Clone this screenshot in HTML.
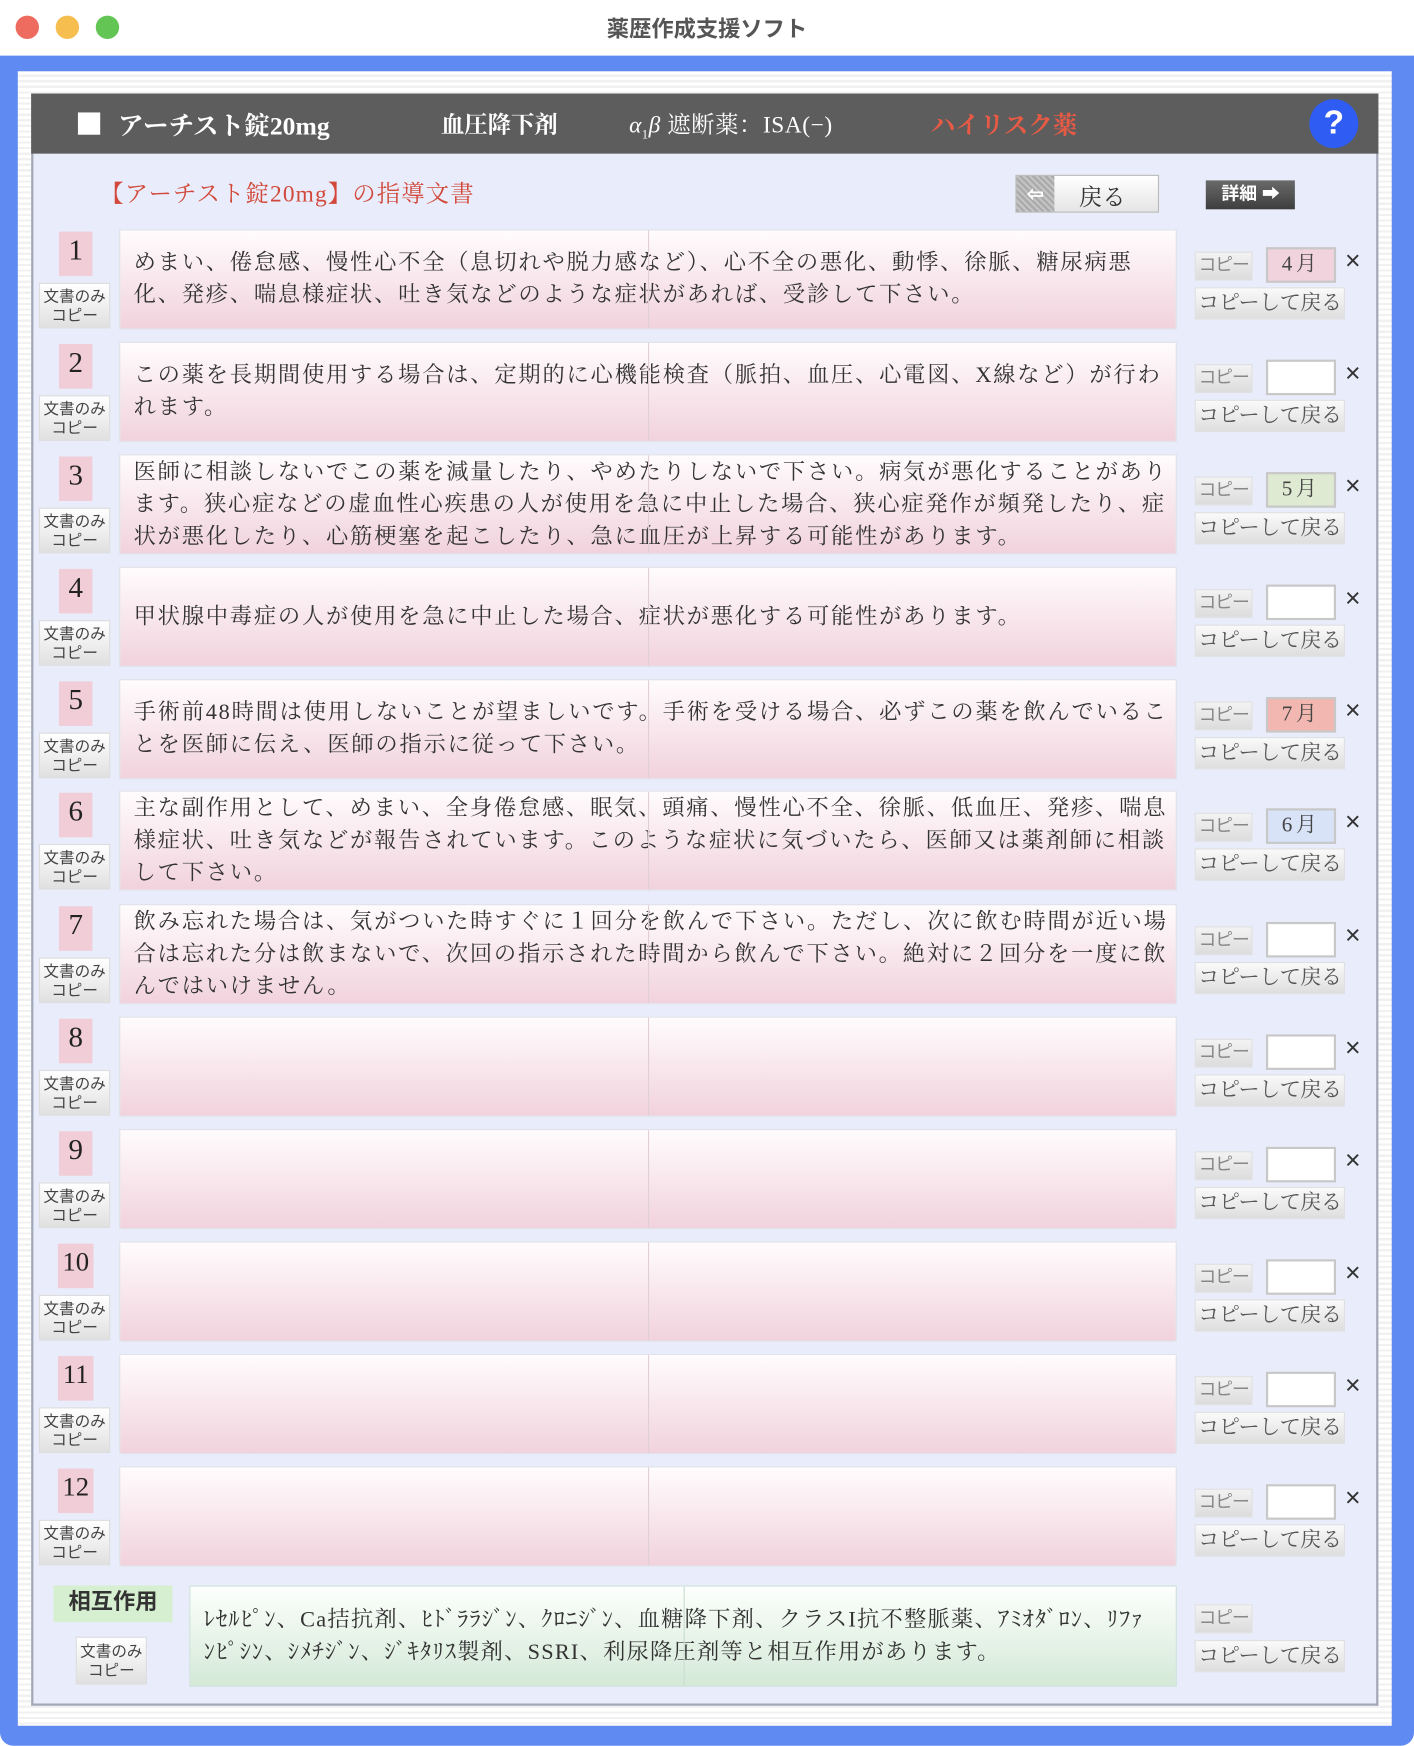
<!DOCTYPE html>
<html><head><meta charset="utf-8">
<style>
*{margin:0;padding:0;box-sizing:border-box}
html,body{width:1414px;height:1746px;overflow:hidden;background:#fff}
#w{position:absolute;left:0;top:0;width:1270px;height:1568px;transform:scale(1.11339);transform-origin:0 0;font-family:"Liberation Serif","Noto Serif CJK SC",serif;color:#333}
.a{position:absolute}
.tb{left:0;top:0;width:1270px;height:50px;background:#fff}
.dot{top:14px;width:21px;height:21px;border-radius:50%}
.ttl{left:0;width:1270px;top:10px;text-align:center;font:bold 20px "Liberation Sans","Noto Sans CJK JP",sans-serif;color:#555}
.blue{left:0;top:50px;width:1270px;height:1518px;background:#5f8af2;border-radius:0 0 12px 12px}
.inner{left:16px;top:64px;width:1234px;height:1486px;background:repeating-linear-gradient(#fff 0 3px,#f1f1f1 3px 5px)}
.panel{left:28px;top:84px;width:1210px;height:1448px;background:#e9edfb;border:2px solid #a3a8b8;border-top:none}
.hdr{left:28px;top:84px;width:1210px;height:54px;background:#5d5d5d;color:#fff;font-size:22px}
.hdr span{position:absolute;top:12px;white-space:nowrap}
.txt{position:absolute;left:107px;top:0;width:950px;height:90px;border:1px solid #e2e2e8;background:linear-gradient(#fffcfd,#f1d2dd);display:flex;align-items:center;padding-left:12px;font-size:20px;letter-spacing:1.6px;line-height:29px;white-space:nowrap;color:#333;overflow:hidden}
.txt:after{content:"";position:absolute;left:474px;top:0;width:1px;height:100%;background:#e0d0d6}
.num{position:absolute;left:53px;top:2px;width:30px;height:40px;background:#f0cdd7;font-size:26px;text-align:center;line-height:34px;color:#222}
.num.w{left:52px;width:32px;font-size:24px}
.doc{position:absolute;left:35px;top:48px;width:64px;height:41px;border:1px solid #ddd;background:linear-gradient(#fff,#e0e0e0);font-size:14px;line-height:17px;text-align:center;padding-top:3px;color:#444;font-family:"Liberation Sans","Noto Sans CJK JP",sans-serif;white-space:nowrap}
.cp{position:absolute;left:1073px;top:20px;width:52px;height:26px;background:linear-gradient(#f3f3f3,#dcdcdc);border:1px solid #e0e0e0;font:16px "Liberation Sans","Noto Sans CJK JP",sans-serif;letter-spacing:-1px;color:#888;text-align:center;line-height:24px;white-space:nowrap;overflow:hidden}
.mo{position:absolute;left:1137px;top:16px;width:63px;height:32px;background:#fff;border:2px solid #c8c8c8;font-size:19px;text-align:center;line-height:28px;letter-spacing:3px;color:#444;white-space:nowrap}
.x{position:absolute;left:1208px;top:15px;font:24px "Liberation Sans",sans-serif;color:#333}
.cr{position:absolute;left:1073px;top:52px;width:135px;height:29px;background:linear-gradient(#fafafa,#dedede);border:1px solid #e0e0e0;font-size:19px;text-align:center;line-height:27px;color:#555;white-space:nowrap;overflow:hidden;letter-spacing:-0.5px}
.row{position:absolute;left:0;width:1270px;height:92px}
</style></head><body><div id="w">
<div class="a tb"></div>
<div class="a dot" style="left:14px;background:#ee6b60"></div>
<div class="a dot" style="left:50px;background:#f5be4f"></div>
<div class="a dot" style="left:86px;background:#62c554"></div>
<div class="a ttl">薬歴作成支援ソフト</div>
<div class="a blue"></div>
<div class="a inner"></div>
<div class="a panel"></div>
<div class="a hdr">
<span style="left:42px;top:17px;width:20px;height:20px;background:#fff"></span>
<span style="left:78px;font-weight:bold;font-size:23px;top:11px">アーチスト錠20mg</span>
<span style="left:368px;font-weight:bold;top:12px;font-size:21px">血圧降下剤</span>
<span style="left:537px;font-size:21px;letter-spacing:0.5px"><i>α</i><sub style="font-size:11px">1</sub><i>β</i> 遮断薬：ISA(−)</span>
<span style="left:808px;color:#e95a45;font-size:22px;font-weight:bold">ハイリスク薬</span>
<span style="left:1148px;top:5px;width:44px;height:44px;border-radius:50%;background:#2f5cf3;text-align:center;font:bold 30px 'Liberation Sans',sans-serif;line-height:44px">?</span>
</div>
<div class="a" style="left:90px;top:158px;font-size:21px;color:#d2483a;letter-spacing:1px">【アーチスト錠20mg】の指導文書</div>
<div class="a" style="left:912px;top:157px;width:129px;height:34px;border:1px solid #bbb;background:linear-gradient(#fff,#e5e5e5)"><div style="position:absolute;left:0;top:0;width:34px;height:32px;background:repeating-linear-gradient(45deg,#aaa 0 2px,#c4c4c4 2px 4px);color:#fff;text-align:center;font:bold 18px sans-serif;line-height:32px">⇦</div><div style="position:absolute;left:56px;top:3px;font-size:21px">戻る</div></div>
<div class="a" style="left:1083px;top:162px;width:80px;height:26px;background:linear-gradient(#6a6a6a,#3e3e3e);color:#fff;font:bold 16px 'Liberation Sans','Noto Sans CJK JP',sans-serif;line-height:26px;padding-left:14px">詳細 ➡</div>

<div class="row" style="top:206px"><div class="num">1</div><div class="doc">文書のみ<br>コピー</div><div class="txt">めまい、倦怠感、慢性心不全（息切れや脱力感など）、心不全の悪化、動悸、徐脈、糖尿病悪<br>化、発疹、喘息様症状、吐き気などのような症状があれば、受診して下さい。</div><div class="cp">コピー</div><div class="mo" style="background:#f1d3dd">4月</div><div class="x">×</div><div class="cr">コピーして戻る</div></div>
<div class="row" style="top:307px"><div class="num">2</div><div class="doc">文書のみ<br>コピー</div><div class="txt">この薬を長期間使用する場合は、定期的に心機能検査（脈拍、血圧、心電図、X線など）が行わ<br>れます。</div><div class="cp">コピー</div><div class="mo"></div><div class="x">×</div><div class="cr">コピーして戻る</div></div>
<div class="row" style="top:408px"><div class="num">3</div><div class="doc">文書のみ<br>コピー</div><div class="txt">医師に相談しないでこの薬を減量したり、やめたりしないで下さい。病気が悪化することがあり<br>ます。狭心症などの虚血性心疾患の人が使用を急に中止した場合、狭心症発作が頻発したり、症<br>状が悪化したり、心筋梗塞を起こしたり、急に血圧が上昇する可能性があります。</div><div class="cp">コピー</div><div class="mo" style="background:#dfead2">5月</div><div class="x">×</div><div class="cr">コピーして戻る</div></div>
<div class="row" style="top:509px"><div class="num">4</div><div class="doc">文書のみ<br>コピー</div><div class="txt">甲状腺中毒症の人が使用を急に中止した場合、症状が悪化する可能性があります。</div><div class="cp">コピー</div><div class="mo"></div><div class="x">×</div><div class="cr">コピーして戻る</div></div>
<div class="row" style="top:610px"><div class="num">5</div><div class="doc">文書のみ<br>コピー</div><div class="txt">手術前48時間は使用しないことが望ましいです。手術を受ける場合、必ずこの薬を飲んでいるこ<br>とを医師に伝え、医師の指示に従って下さい。</div><div class="cp">コピー</div><div class="mo" style="background:#f2b7b0">7月</div><div class="x">×</div><div class="cr">コピーして戻る</div></div>
<div class="row" style="top:710px"><div class="num">6</div><div class="doc">文書のみ<br>コピー</div><div class="txt">主な副作用として、めまい、全身倦怠感、眠気、頭痛、慢性心不全、徐脈、低血圧、発疹、喘息<br>様症状、吐き気などが報告されています。このような症状に気づいたら、医師又は薬剤師に相談<br>して下さい。</div><div class="cp">コピー</div><div class="mo" style="background:#d9e3f8">6月</div><div class="x">×</div><div class="cr">コピーして戻る</div></div>
<div class="row" style="top:812px"><div class="num">7</div><div class="doc">文書のみ<br>コピー</div><div class="txt">飲み忘れた場合は、気がついた時すぐに１回分を飲んで下さい。ただし、次に飲む時間が近い場<br>合は忘れた分は飲まないで、次回の指示された時間から飲んで下さい。絶対に２回分を一度に飲<br>んではいけません。</div><div class="cp">コピー</div><div class="mo"></div><div class="x">×</div><div class="cr">コピーして戻る</div></div>
<div class="row" style="top:913px"><div class="num">8</div><div class="doc">文書のみ<br>コピー</div><div class="txt"></div><div class="cp">コピー</div><div class="mo"></div><div class="x">×</div><div class="cr">コピーして戻る</div></div>
<div class="row" style="top:1014px"><div class="num">9</div><div class="doc">文書のみ<br>コピー</div><div class="txt"></div><div class="cp">コピー</div><div class="mo"></div><div class="x">×</div><div class="cr">コピーして戻る</div></div>
<div class="row" style="top:1115px"><div class="num w">10</div><div class="doc">文書のみ<br>コピー</div><div class="txt"></div><div class="cp">コピー</div><div class="mo"></div><div class="x">×</div><div class="cr">コピーして戻る</div></div>
<div class="row" style="top:1216px"><div class="num w">11</div><div class="doc">文書のみ<br>コピー</div><div class="txt"></div><div class="cp">コピー</div><div class="mo"></div><div class="x">×</div><div class="cr">コピーして戻る</div></div>
<div class="row" style="top:1317px"><div class="num w">12</div><div class="doc">文書のみ<br>コピー</div><div class="txt"></div><div class="cp">コピー</div><div class="mo"></div><div class="x">×</div><div class="cr">コピーして戻る</div></div>

<div class="a" style="left:48px;top:1424px;width:107px;height:33px;background:#d6efd0;font:bold 20px 'Liberation Sans','Noto Sans CJK JP',sans-serif;text-align:center;line-height:30px;color:#333">相互作用</div>
<div class="doc" style="left:68px;top:1470px;height:43px;padding-top:4px">文書のみ<br>コピー</div>
<div class="a" style="left:170px;top:1424px;width:887px;height:91px;border:1px solid #cfe3da;background:linear-gradient(#fdfffd,#d4e9d7);padding:16px 0 0 12px;font-size:20px;line-height:29px;letter-spacing:1.1px;white-space:nowrap;overflow:hidden">ﾚｾﾙﾋﾟﾝ、Ca拮抗剤、ﾋﾄﾞﾗﾗｼﾞﾝ、ｸﾛﾆｼﾞﾝ、血糖降下剤、クラスI抗不整脈薬、ｱﾐｵﾀﾞﾛﾝ、ﾘﾌｧ<br>ﾝﾋﾟｼﾝ、ｼﾒﾁｼﾞﾝ、ｼﾞｷﾀﾘｽ製剤、SSRI、利尿降圧剤等と相互作用があります。<div style="position:absolute;left:443px;top:0;width:1px;height:89px;background:#c8ddd0"></div></div>
<div class="cp" style="top:1441px">コピー</div>
<div class="cr" style="top:1473px">コピーして戻る</div>
</div></body></html>
